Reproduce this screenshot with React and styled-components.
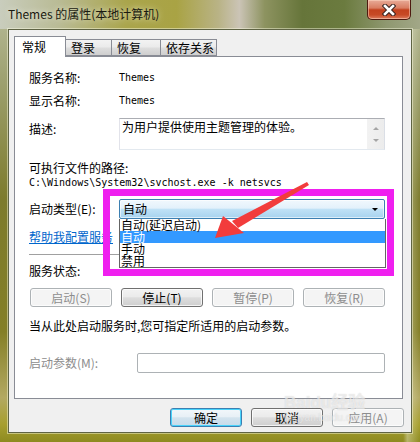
import React from 'react'
import styled, { createGlobalStyle } from 'styled-components'

const GlobalStyle = createGlobalStyle`
  html, body {
    margin: 0;
    padding: 0;
    background: #7b8340;
  }
  body {
    font-family: "Noto Sans CJK SC", "Noto Sans", sans-serif;
    font-size: 12px;
    color: #000;
  }
`

const Window = styled.div`
  position: relative;
  width: 420px;
  height: 442px;
  box-sizing: border-box;
  display: flex;
  flex-direction: column;
  padding: 0 8px 9px 8px;
  overflow: hidden;
  background:
    linear-gradient(90deg, rgba(0,0,0,0) 0%, rgba(0,0,0,0) 96%, rgba(255,255,240,0.35) 97%, rgba(0,0,0,0) 100%),
    linear-gradient(180deg, #b9bd9c 0%, #9ea170 18%, #7d7b2c 45%, #847f26 75%, #b3a962 90%, #a79f2e 96%, #8d8a20 100%);
`

const TitleBar = styled.div`
  height: 29px;
  margin: 0 -8px;
  display: flex;
  align-items: flex-start;
  justify-content: space-between;
  background: linear-gradient(90deg, #c9cdbd 0%, #b9bb95 14%, #aaa54c 30%, #a9a344 42%, #b9b386 52%, #cbc4b6 57%, #8d9360 63%, #66753a 72%, #6b7b3f 82%, #8f9870 92%, #a2a787 100%);
`

const Title = styled.div`
  padding: 6px 0 0 8px;
  font-size: 12px;
  line-height: 16px;
  color: #1a1a10;
  text-shadow: 0 0 6px rgba(255, 255, 240, 0.8);
`

const CloseButton = styled.div`
  width: 44px;
  height: 20px;
  margin-right: 9px;
  box-sizing: border-box;
  border: 1px solid #4e1a10;
  border-top: none;
  border-radius: 0 0 5px 5px;
  display: flex;
  align-items: center;
  justify-content: center;
  background: linear-gradient(180deg, #e8ab98 0%, #d97d62 42%, #c3421f 52%, #c74a26 78%, #dc7c5e 100%);
  box-shadow: inset 0 0 0 1px rgba(255, 220, 200, 0.5);
`

const Client = styled.div`
  flex: 1;
  display: flex;
  flex-direction: column;
  background: #f0f0f0;
  border: 1px solid #5f6444;
  padding: 6px 0 0 5px;
  box-shadow: 0 0 0 1px rgba(255, 255, 230, 0.45);
`

const TabRow = styled.div`
  display: flex;
  align-items: flex-end;
  height: 20px;
`

const Tab = styled.div`
  position: relative;
  z-index: ${(p) => (p.active ? 2 : 1)};
  width: ${(p) => p.w}px;
  height: ${(p) => (p.active ? 21 : 17)}px;
  margin-bottom: ${(p) => (p.active ? -1 : 0)}px;
  margin-left: -1px;
  box-sizing: border-box;
  border: 1px solid #898c95;
  border-bottom: ${(p) => (p.active ? 'none' : '1px solid #898c95')};
  padding-left: ${(p) => (p.active ? 7 : 5)}px;
  line-height: ${(p) => (p.active ? 20 : 15)}px;
  font-size: 12px;
  background: ${(p) =>
    p.active ? '#ffffff' : 'linear-gradient(180deg, #f3f3f3 0%, #ebebeb 45%, #dddddd 55%, #cfcfcf 100%)'};
  &:first-child {
    margin-left: 0;
  }
`

const Panel = styled.div`
  width: 389px;
  height: 343px;
  box-sizing: border-box;
  border: 1px solid #898c95;
  background: #ffffff;
  padding: 0 17px 0 14px;
  display: flex;
  flex-direction: column;
`

const Row = styled.div`
  display: flex;
  align-items: ${(p) => p.align || 'center'};
  height: ${(p) => p.h}px;
  margin-top: ${(p) => p.mt}px;
  flex-shrink: 0;
`

const Label = styled.div`
  width: ${(p) => p.w || 90}px;
  flex-shrink: 0;
  line-height: 14px;
  color: ${(p) => (p.disabled ? '#8d8d8d' : '#000')};
  margin-top: ${(p) => p.mt || 0}px;
`

const Text = styled.div`
  line-height: 14px;
  white-space: nowrap;
`

const Mono = styled.div`
  font-family: "DejaVu Sans Mono", "Liberation Mono", monospace;
  font-size: 10px;
  line-height: 14px;
  white-space: nowrap;
`

const TextArea = styled.div`
  width: 266px;
  height: 32px;
  box-sizing: border-box;
  border: 1px solid #abadb3;
  border-left-color: #e2e3ea;
  border-right-color: #dbdfe6;
  border-bottom-color: #e3e9ef;
  display: flex;
  background: #fff;
`

const AreaText = styled.div`
  flex: 1;
  padding: 0 0 0 2px;
  line-height: 15px;
`

const ScrollBar = styled.div`
  width: 17px;
  background: linear-gradient(90deg, #f2f2f2, #ececec);
  display: flex;
  flex-direction: column;
  align-items: center;
  justify-content: space-around;
  padding: 3px 0;
  box-sizing: border-box;
`

const Arrow = styled.div`
  width: 0;
  height: 0;
  border-left: 3.5px solid transparent;
  border-right: 3.5px solid transparent;
  ${(p) => (p.up ? 'border-bottom' : 'border-top')}: 3px solid ${(p) => p.color || '#a5a5a5'};
`

const ComboWrap = styled.div`
  position: relative;
  width: 266px;
  height: 20px;
`

const Combo = styled.div`
  height: 100%;
  box-sizing: border-box;
  border: 1px solid #3c7fb1;
  border-radius: 2px;
  padding-left: 3px;
  display: flex;
  align-items: center;
  justify-content: space-between;
  padding-right: 6px;
  line-height: 14px;
  background: linear-gradient(180deg, #f1f8fd 0%, #e3f1fb 45%, #bfe1f6 52%, #a7d3ef 100%);
  box-shadow: inset 0 0 0 1px rgba(255, 255, 255, 0.6);
`

const DropList = styled.div`
  position: absolute;
  left: 0;
  top: 100%;
  width: 267px;
  box-sizing: border-box;
  border: 1px solid #646464;
  border-top: none;
  background: #fff;
  z-index: 3;
`

const DropItem = styled.div`
  height: 12px;
  line-height: 12px;
  padding-left: 1px;
  background: ${(p) => (p.selected ? '#3399ff' : 'transparent')};
  color: ${(p) => (p.selected ? '#fff' : '#000')};
  white-space: nowrap;
`

const Link = styled.div`
  color: #0066cc;
  text-decoration: underline;
  line-height: 14px;
  white-space: nowrap;
`

const Separator = styled.div`
  height: 0;
  border-top: 1px solid #a0a0a0;
  margin-top: ${(p) => p.mt}px;
  flex-shrink: 0;
`

const ButtonRow = styled.div`
  display: flex;
  gap: 9px;
  margin-top: ${(p) => p.mt || 0}px;
  padding-left: ${(p) => p.pl || 0}px;
  flex-shrink: 0;
`

const Button = styled.div`
  width: ${(p) => p.w || 82}px;
  height: 19px;
  box-sizing: border-box;
  border-radius: 3px;
  display: flex;
  align-items: center;
  justify-content: center;
  font-size: 12px;
  line-height: 14px;
  border: 1px solid ${(p) => (p.disabled ? '#adb2b5' : p.primary ? '#3c7fb1' : '#707070')};
  color: ${(p) => (p.disabled ? '#8d8d8d' : '#000')};
  background: ${(p) =>
    p.disabled
      ? '#f4f4f4'
      : p.primary
      ? 'linear-gradient(180deg, #f2f7fb 0%, #e8f0f6 45%, #d3e3ee 52%, #c6dbea 100%)'
      : 'linear-gradient(180deg, #f2f2f2 0%, #ebebeb 45%, #dddddd 52%, #cfcfcf 100%)'};
  box-shadow: ${(p) =>
    p.primary ? 'inset 0 0 0 1px #48d3fb' : 'inset 0 0 0 1px rgba(255,255,255,0.75)'};
`

const Input = styled.div`
  width: 248px;
  height: 20px;
  box-sizing: border-box;
  border: 1px solid #adb2b5;
  border-radius: 2px;
  background: #fff;
`

const BottomBar = styled.div`
  display: flex;
  gap: 9px;
  justify-content: flex-end;
  padding-right: 7px;
  margin-top: 9px;
`

const Highlight = styled.div`
  position: absolute;
  left: 103px;
  top: 189px;
  width: 291px;
  height: 87px;
  box-sizing: border-box;
  border: 7px solid #ef1fef;
  pointer-events: none;
  z-index: 5;
`

const Overlay = styled.svg`
  position: absolute;
  left: 0;
  top: 0;
  z-index: 6;
  pointer-events: none;
`

const Watermark = styled.div`
  position: absolute;
  left: 284px;
  top: 394px;
  z-index: 6;
  color: rgba(255, 255, 255, 0.55);
  font-family: "Liberation Sans", "Noto Sans CJK SC", sans-serif;
  font-weight: bold;
  text-shadow: 0 0 1px rgba(160, 160, 160, 0.45);
  pointer-events: none;
`

const WmBig = styled.div`
  font-size: 17px;
  line-height: 18px;
`

const WmSmall = styled.div`
  font-size: 10px;
  line-height: 11px;
  font-weight: normal;
`

const CloseGlyph = () => (
  <svg width="14" height="12" viewBox="0 0 14 12">
    <path d="M3 2 L11 10 M11 2 L3 10" stroke="#3a2420" strokeWidth="4.6" strokeLinecap="square" />
    <path d="M3 2 L11 10 M11 2 L3 10" stroke="#ffffff" strokeWidth="2.6" strokeLinecap="square" />
  </svg>
)

const tabs = [
  { label: '常规', w: 52, active: true },
  { label: '登录', w: 47 },
  { label: '恢复', w: 50 },
  { label: '依存关系', w: 57 },
]

const App = () => {
  return (
    <>
      <GlobalStyle />
      <Window>
        <TitleBar>
          <Title>Themes 的属性(本地计算机)</Title>
          <CloseButton>
            <CloseGlyph />
          </CloseButton>
        </TitleBar>
        <Client>
          <TabRow>
            {tabs.map((t) => (
              <Tab key={t.label} w={t.w} active={t.active}>
                {t.label}
              </Tab>
            ))}
          </TabRow>
          <Panel>
            <Row h={14} mt={14}>
              <Label>服务名称:</Label>
              <Mono>Themes</Mono>
            </Row>
            <Row h={14} mt={9}>
              <Label>显示名称:</Label>
              <Mono>Themes</Mono>
            </Row>
            <Row h={32} mt={10} align="flex-start">
              <Label mt={4}>描述:</Label>
              <TextArea>
                <AreaText>为用户提供使用主题管理的体验。</AreaText>
                <ScrollBar>
                  <Arrow up />
                  <Arrow />
                </ScrollBar>
              </TextArea>
            </Row>
            <Row h={14} mt={11}>
              <Text>可执行文件的路径:</Text>
            </Row>
            <Row h={14} mt={1}>
              <Mono>C:\Windows\System32\svchost.exe -k netsvcs</Mono>
            </Row>
            <Row h={20} mt={9}>
              <Label>启动类型(E):</Label>
              <ComboWrap>
                <Combo>
                  <span>自动</span>
                  <Arrow color="#000" />
                </Combo>
                <DropList>
                  <DropItem>自动(延迟启动)</DropItem>
                  <DropItem selected>自动</DropItem>
                  <DropItem>手动</DropItem>
                  <DropItem>禁用</DropItem>
                </DropList>
              </ComboWrap>
            </Row>
            <Row h={14} mt={11}>
              <Link>帮助我配置服务</Link>
            </Row>
            <Separator mt={10} />
            <Row h={14} mt={9}>
              <Text>服务状态:</Text>
            </Row>
            <ButtonRow mt={10} pl={1}>
              <Button disabled>启动(S)</Button>
              <Button>停止(T)</Button>
              <Button disabled>暂停(P)</Button>
              <Button disabled>恢复(R)</Button>
            </ButtonRow>
            <Row h={14} mt={12}>
              <Text>当从此处启动服务时,您可指定所适用的启动参数。</Text>
            </Row>
            <Row h={20} mt={20}>
              <Label w={108} disabled>
                启动参数(M):
              </Label>
              <Input />
            </Row>
          </Panel>
          <BottomBar>
            <Button w={72} primary>
              确定
            </Button>
            <Button w={72}>取消</Button>
            <Button w={72} disabled>
              应用(A)
            </Button>
          </BottomBar>
        </Client>
        <Highlight />
        <Overlay width="420" height="442" viewBox="0 0 420 442">
          <polygon points="307,182 309,185 238,228 232,221" fill="#f23c3c" />
          <polygon points="215,238 223,216 244,233" fill="#f23c3c" />
        </Overlay>
        <Watermark>
          <WmBig>Baidu经验</WmBig>
          <WmSmall>jingyan.baidu.com</WmSmall>
        </Watermark>
      </Window>
    </>
  )
}

export default App
